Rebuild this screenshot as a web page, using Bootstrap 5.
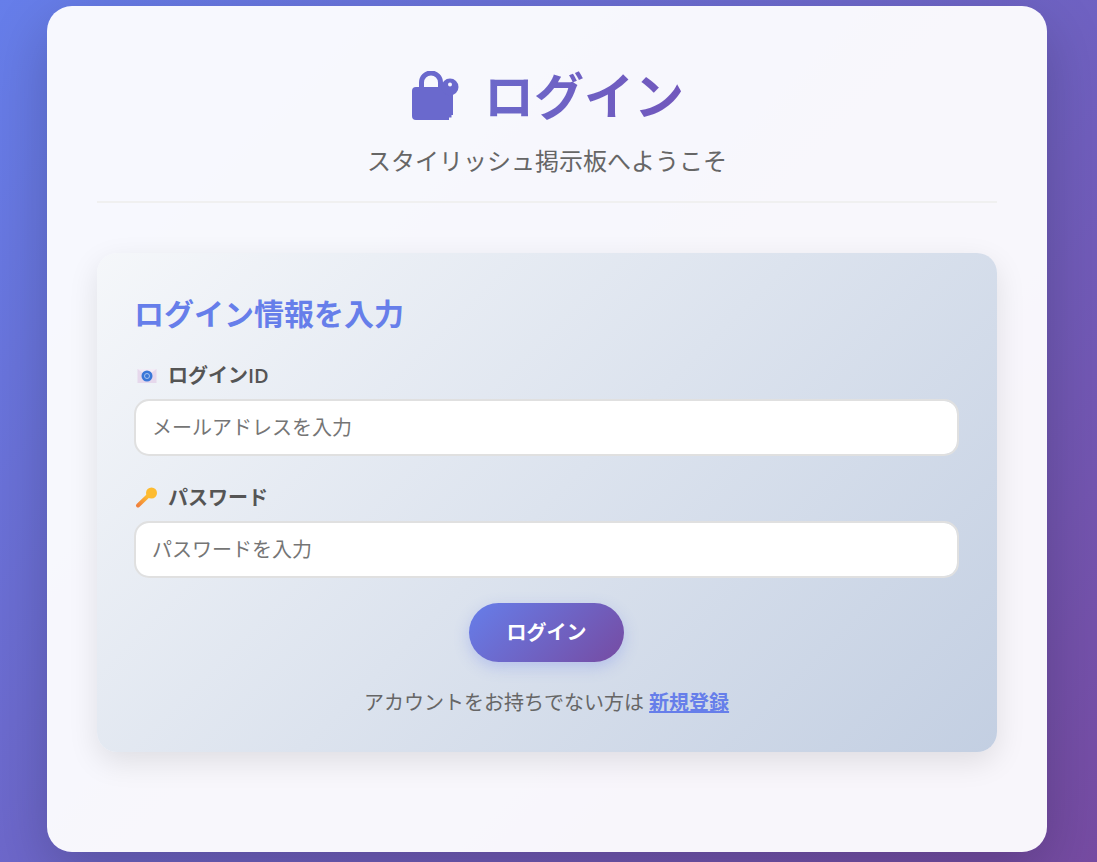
<!DOCTYPE html>
<html lang="ja">
  <head>
    <meta charset="UTF-8" />
    <meta name="viewport" content="width=device-width, initial-scale=1.0" />
    <title>ログイン</title>
    <link
      rel="stylesheet"
      href="https://cdn.jsdelivr.net/npm/bootstrap@5.3.3/dist/css/bootstrap.min.css"
    />
    <script src="https://cdn.jsdelivr.net/npm/bootstrap@5.3.3/dist/js/bootstrap.bundle.min.js"></script>
    <style>
      html,
      body {
        height: 100%;
      }
      body {
        font-family: "Open Sans", "Noto Sans CJK JP", sans-serif;
        background: linear-gradient(135deg, #667eea 0%, #764ba2 100%);
        overflow: hidden;
      }
      .page-shell {
        width: 1000px;
        height: 846px;
        margin: 6px 0 0 47px;
        padding: 50px;
        background: rgba(255, 255, 255, 0.95);
        border-radius: 25px;
        box-shadow: 0 20px 60px rgba(0, 0, 0, 0.2);
      }
      .page-head {
        height: 147px;
        margin-bottom: 50px;
        border-bottom: 2px solid #f0f0f0;
      }
      .page-title {
        height: 80px;
        margin: 0;
        gap: 24px;
        font-size: 50px;
        font-weight: 700;
      }
      .page-title span {
        background: linear-gradient(90deg, #6c69ca, #7157bc);
        -webkit-background-clip: text;
        background-clip: text;
        color: transparent;
      }
      .page-sub {
        margin: 9px 0 0;
        font-size: 24px;
        line-height: 32px;
        color: #666;
      }
      .login-box {
        height: 499px;
        padding: 37px 38px 0 37px;
        background: linear-gradient(135deg, #f5f7fa 0%, #c3cfe2 100%);
        border-radius: 20px;
        box-shadow: 0 10px 30px rgba(0, 0, 0, 0.1);
      }
      .box-title {
        margin: 0 0 21px;
        font-size: 30px;
        line-height: 48px;
        font-weight: 700;
        color: #667eea;
      }
      .field-label {
        margin-bottom: 7px;
        gap: 10px;
        font-size: 20px;
        line-height: 33px;
        font-weight: 600;
        color: #555;
      }
      .field-input.form-control {
        height: 57px;
        padding: 0 16px;
        font-size: 20px;
        border: 2px solid #e0e0e0;
        border-radius: 15px;
      }
      .field-input.form-control::placeholder {
        color: #757575;
      }
      .field-group {
        margin-bottom: 25px;
      }
      .login-btn.btn {
        width: 155px;
        height: 59px;
        font-size: 20px;
        font-weight: 700;
        color: #fff;
        border: 0;
        border-radius: 30px;
        background: linear-gradient(135deg, #667eea 0%, #764ba2 100%);
        box-shadow: 0 5px 15px rgba(102, 126, 234, 0.3);
      }
      .signup-line {
        margin: 25px 0 0;
        font-size: 20px;
        line-height: 32px;
        color: #666;
      }
      .signup-line a {
        color: #667eea;
        font-weight: 600;
      }
    </style>
  </head>

  <body>
    <div class="page-shell">
      <header class="page-head text-center">
        <h1 class="page-title d-flex justify-content-center align-items-center">
          <svg width="50" height="50" viewBox="0 0 50 50" aria-hidden="true">
            <path
              d="M11.500 18v-6.500a9.500 9.500 0 0 1 19 0V18"
              fill="none"
              stroke="#6a69cd"
              stroke-width="5"
            />
            <path
              d="M6 16h30a4 4 0 0 1 4 4v2h3v22h-1.500v2.500h-2.500V49H6a4 4 0 0 1-4-4V20a4 4 0 0 1 4-4z"
              fill="#6a69cd"
            />
            <circle cx="40" cy="16" r="8.500" fill="#6a69cd" />
            <circle cx="40" cy="13.500" r="2" fill="#f8f8fe" />
          </svg>
          <span>ログイン</span>
        </h1>
        <p class="page-sub">スタイリッシュ掲示板へようこそ</p>
      </header>

      <section class="login-box">
        <h2 class="box-title">ログイン情報を入力</h2>
        <form>
          <div class="field-group">
            <label for="loginId" class="field-label d-flex align-items-center">
              <svg width="24" height="24" viewBox="0 0 24 24" aria-hidden="true">
                <rect x="3.500" y="5" width="19" height="14" fill="#e6d8ec" />
                <path d="M3.500 5l9.500 7 9.500-7z" fill="#f3ecf6" />
                <circle cx="13" cy="12" r="5.500" fill="#3b78d8" />
                <circle cx="13" cy="12" r="2.500" fill="none" stroke="#a9c4ee" stroke-width="1" />
              </svg>
              <span>ログインID</span>
            </label>
            <input id="loginId" type="text" class="form-control field-input" placeholder="メールアドレスを入力" />
          </div>
          <div class="field-group">
            <label for="loginPass" class="field-label d-flex align-items-center">
              <svg width="24" height="24" viewBox="0 0 24 24" aria-hidden="true">
                <defs>
                  <linearGradient id="keyFill" x1="0" y1="1" x2="1" y2="0">
                    <stop offset="0" stop-color="#f0803c" />
                    <stop offset="1" stop-color="#ffc531" />
                  </linearGradient>
                </defs>
                <path d="M4 19.500L15 9" stroke="url(#keyFill)" stroke-width="4" stroke-linecap="round" />
                <circle cx="17.500" cy="7" r="5.500" fill="#fdbb30" />
              </svg>
              <span>パスワード</span>
            </label>
            <input id="loginPass" type="password" class="form-control field-input" placeholder="パスワードを入力" />
          </div>
          <div class="text-center">
            <button type="button" class="btn login-btn">ログイン</button>
            <p class="signup-line">アカウントをお持ちでない方は <a href="#">新規登録</a></p>
          </div>
        </form>
      </section>
    </div>
  </body>
</html>
